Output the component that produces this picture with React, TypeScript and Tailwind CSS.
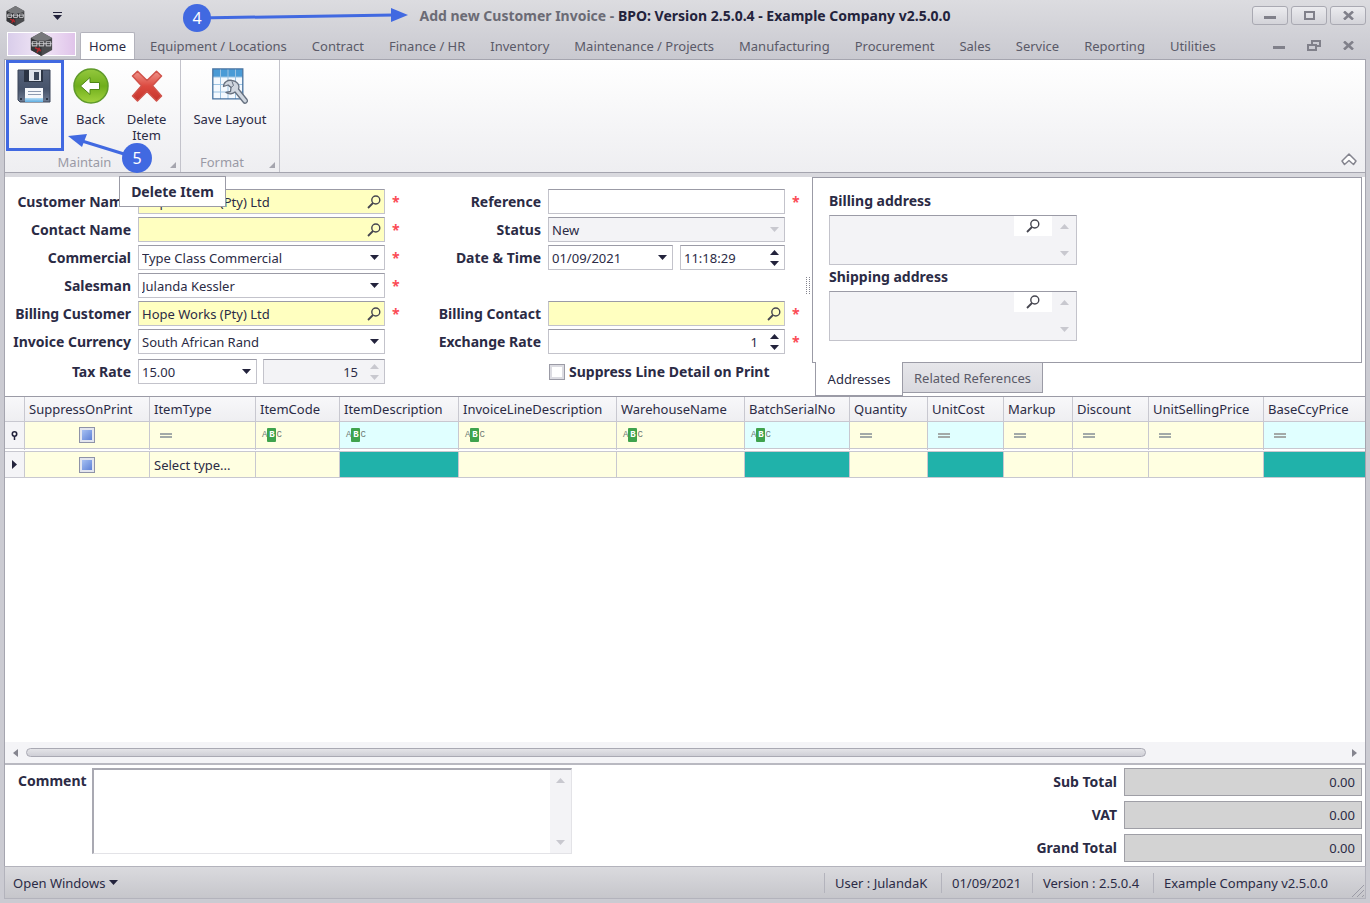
import type { ReactNode } from "react";
import clsx from "clsx";

const TABS = [
    "Equipment / Locations",
    "Contract",
    "Finance / HR",
    "Inventory",
    "Maintenance / Projects",
    "Manufacturing",
    "Procurement",
    "Sales",
    "Service",
    "Reporting",
    "Utilities",
];

interface Column {
    name: string;
    width: string;
    filter: "check" | "equals" | "text";
    locked?: boolean;
}

const COLUMNS: Column[] = [
    { name: "SuppressOnPrint", width: "w-[125px]", filter: "check" },
    { name: "ItemType", width: "w-[106px]", filter: "equals" },
    { name: "ItemCode", width: "w-[84px]", filter: "text" },
    { name: "ItemDescription", width: "w-[119px]", filter: "text", locked: true },
    { name: "InvoiceLineDescription", width: "w-[158px]", filter: "text" },
    { name: "WarehouseName", width: "w-[128px]", filter: "text" },
    { name: "BatchSerialNo", width: "w-[105px]", filter: "text", locked: true },
    { name: "Quantity", width: "w-[78px]", filter: "equals" },
    { name: "UnitCost", width: "w-[76px]", filter: "equals", locked: true },
    { name: "Markup", width: "w-[69px]", filter: "equals" },
    { name: "Discount", width: "w-[76px]", filter: "equals" },
    { name: "UnitSellingPrice", width: "w-[115px]", filter: "equals" },
    { name: "BaseCcyPrice", width: "w-auto", filter: "equals", locked: true },
];

const TOTALS = ["Sub Total", "VAT", "Grand Total"];

function Arrow({ up = false, muted = false }: { up?: boolean; muted?: boolean }) {
    return (
        <svg viewBox="0 0 9 5" className={clsx("h-[5px] w-[9px] shrink-0", muted ? "fill-[#c8c8cf]" : "fill-[#23233c]")} aria-hidden="true">
            <path d={up ? "M0 5h9L4.500 0z" : "M0 0h9L4.500 5z"} />
        </svg>
    );
}

function SearchIcon() {
    return (
        <svg viewBox="0 0 14 14" className="size-[14px] shrink-0 fill-none stroke-[#45454f]" strokeWidth="1.400" aria-hidden="true">
            <circle cx="8.800" cy="5" r="4" />
            <path d="M6 8 1 13" strokeWidth="1.800" />
        </svg>
    );
}

function HexLogo({ className }: { className: string }) {
    return (
        <svg viewBox="0 0 24 26" className={className} aria-hidden="true">
            <path d="M12 0 23.500 6.500v13L12 26 .5 19.500v-13z" fill="#4b4c4f" />
            <path d="M12 0 23.500 6.500 12 12 .5 6.500z" fill="#77787b" />
            <path d="M12 13v13L.5 19.500v-13z" fill="#333538" />
            <path d="M1 9.500h22v6.500H1z" fill="#26272a" />
            <path d="M2 10.500h5v4.500H2zM9.500 10.500h5v4.500h-5zM17 10.500h5v4.500h-5z" fill="none" stroke="#c4c4c8" strokeWidth="1.200" />
            <path d="M1 12.700h22" stroke="#d4d4d8" />
            <path d="M5 17l4 2-2 3M9 17l2 4" stroke="#b3262c" strokeWidth="1.600" fill="none" />
        </svg>
    );
}

function SaveIcon() {
    return (
        <svg viewBox="0 0 34 34" className="size-[34px]" aria-hidden="true">
            <defs>
                <linearGradient id="disk" x1="0" y1="0" x2="0" y2="1">
                    <stop offset="0" stopColor="#55627a" />
                    <stop offset="0.600" stopColor="#46536a" />
                    <stop offset="1" stopColor="#6f7c92" />
                </linearGradient>
                <linearGradient id="diskBlue" x1="0" y1="0" x2="0" y2="1">
                    <stop offset="0" stopColor="#b5dcf5" />
                    <stop offset="1" stopColor="#5faee2" />
                </linearGradient>
            </defs>
            <path d="M1 1h32v32H3l-2-2z" fill="url(#disk)" stroke="#3a4559" />
            <path d="M7 1h19v12H7z" fill="#2b3444" />
            <path d="M12 1h12v11H12z" fill="#dfe4ec" />
            <path d="M17 3h5v8h-5z" fill="#3a465a" />
            <path d="M8 19h18v14H8z" fill="#f6f8fb" />
            <path d="M8 29h18v4H8z" fill="url(#diskBlue)" />
            <path d="M11 22.500h13M11 25.500h13" stroke="#8d9ab0" />
            <path d="M3 29h2v2H3zM29 29h2v2h-2z" fill="#2b3444" />
        </svg>
    );
}

function BackIcon() {
    return (
        <svg viewBox="0 0 36 36" className="size-[36px]" aria-hidden="true">
            <defs>
                <linearGradient id="green" x1="0" y1="0" x2="0" y2="1">
                    <stop offset="0" stopColor="#94c83e" />
                    <stop offset="0.500" stopColor="#6fae1c" />
                    <stop offset="1" stopColor="#a3d33f" />
                </linearGradient>
            </defs>
            <circle cx="18" cy="18" r="17" fill="url(#green)" stroke="#5f9a2a" strokeWidth="1.500" />
            <path d="M7.500 18 17 9.500v5h9.500v7H17v5z" fill="#fff" stroke="#4f8716" />
        </svg>
    );
}

function DeleteIcon() {
    return (
        <svg viewBox="0 0 32 32" className="size-[32px]" aria-hidden="true">
            <defs>
                <linearGradient id="red" x1="0" y1="0" x2="0" y2="1">
                    <stop offset="0" stopColor="#f0948a" />
                    <stop offset="0.500" stopColor="#dc4a40" />
                    <stop offset="1" stopColor="#c4332c" />
                </linearGradient>
            </defs>
            <path
                d="M1.500 6 6.500 1.200 16 10.500 25.500 1.200 30.500 6 21.500 15.800 30.500 26 25.500 31 16 21.500 6.500 31 1.500 26 10.500 15.800z"
                fill="url(#red)"
                stroke="#d0524a"
                strokeWidth="1.500"
                strokeLinejoin="round"
            />
        </svg>
    );
}

function LayoutIcon() {
    return (
        <svg viewBox="0 0 36 37" className="h-[37px] w-[36px]" aria-hidden="true">
            <path d="M.8.8h30v30H.8z" fill="#f4f9fe" />
            <path d="M1 1h29.500v8H1z" fill="#4a9bd6" />
            <path d="M1 9h30M1 16.500h30M1 24h30M8.500 1v30M16 1v30M23.500 1v30" stroke="#9cc3e2" />
            <path d="M.8.8h30v30H.8z" fill="none" stroke="#4672a0" strokeWidth="1.300" />
            <path
                d="M20 12.500c-4-1-8.500 1.500-8.500 6l4.500-1.500 3 2.500-.5 4-4.500 1c3 2 7 1.500 9-.5l8.500 10.500c1.500 2 5-.5 3.500-3L26.500 21c1.500-4-1.500-8-6.500-8.500z"
                fill="#cfd6df"
                stroke="#66707f"
                strokeLinejoin="round"
                strokeWidth="1.300"
            />
            <path d="M20 13.500l1.500 4-2.500 2-3-2.500" fill="none" stroke="#66707f" />
        </svg>
    );
}

function RibbonButton({ icon, label, className }: { icon: ReactNode; label: string; className: string }) {
    return (
        <button type="button" className={clsx("flex flex-col items-center text-center leading-4", className)}>
            <span className="mb-1.5 flex h-[38px] items-center">{icon}</span>
            {label}
        </button>
    );
}

function RibbonGroup({ title, className, children }: { title: string; className: string; children: ReactNode }) {
    return (
        <section className={clsx("flex flex-col border-r border-[#c3c3cb]", className)}>
            <div className="flex flex-1 items-start pt-[7px]">{children}</div>
            <div className="relative flex h-5 items-center justify-center pr-4 text-[#9a9aa6]">
                {title}
                <svg viewBox="0 0 6 6" className="absolute right-1 bottom-1 size-[6px] fill-[#a5a5ae]" aria-hidden="true">
                    <path d="M6 0v6H0z" />
                </svg>
            </div>
        </section>
    );
}

interface FieldProps {
    id: string;
    label: string;
    value?: string;
    kind?: "search" | "select" | "spin" | "plain";
    disabled?: boolean;
    align?: "left" | "right";
    className?: string;
}

function Box({ id, label, value = "", kind = "plain", disabled = false, align = "left", className }: FieldProps) {
    return (
        <div
            className={clsx(
                "flex h-[25px] min-w-0 items-center border border-[#c3c3cb] border-t-[#9b9ba6]",
                kind === "search" ? "bg-[#ffffc0]" : disabled ? "bg-[#f3f3f6]" : "bg-white",
                className,
            )}
        >
            {kind === "select" ? (
                <div className="relative flex h-full min-w-0 flex-1 items-center">
                    <select
                        id={id}
                        aria-label={label}
                        disabled={disabled}
                        className="h-full w-full appearance-none bg-transparent pl-[3px] opacity-100"
                    >
                        <option>{value}</option>
                    </select>
                    <span className="pointer-events-none absolute right-[5px]">
                        <Arrow muted={disabled} />
                    </span>
                </div>
            ) : (
                <input
                    id={id}
                    aria-label={label}
                    disabled={disabled}
                    defaultValue={value}
                    className={clsx(
                        "h-full min-w-0 flex-1 bg-transparent",
                        align === "right" ? "pr-3 text-right" : "pl-[3px]",
                    )}
                />
            )}
            {kind === "search" && (
                <button type="button" aria-label={`Find ${label}`} className="pr-[3px]">
                    <SearchIcon />
                </button>
            )}
            {kind === "spin" && (
                <span className="flex flex-col gap-1.5 pr-[5px]">
                    <Arrow up muted={disabled} />
                    <Arrow muted={disabled} />
                </span>
            )}
        </div>
    );
}

function Row({ id, label, required = false, children }: { id: string; label: string; required?: boolean; children: ReactNode }) {
    return (
        <>
            <label htmlFor={id} className="text-right text-sm leading-[25px] font-bold whitespace-nowrap">
                {label}
            </label>
            <div className="flex gap-1.5">{children}</div>
            <span className="text-sm leading-[25px] font-bold text-[#fb4a55]">{required && "*"}</span>
        </>
    );
}

function Address({ id, label }: { id: string; label: string }) {
    return (
        <div className="w-[248px]">
            <label htmlFor={id} className="block pb-1 text-sm leading-5 font-bold">
                {label}
            </label>
            <div className="flex h-[50px] items-start border border-[#c3c3cb] border-t-[#9b9ba6] bg-[#f3f3f6]">
                <textarea id={id} readOnly className="h-full min-w-0 flex-1 resize-none" />
                <button type="button" aria-label={`Find ${label}`} className="flex h-5 w-[38px] items-center justify-center bg-white">
                    <SearchIcon />
                </button>
                <span className="flex h-full w-6 flex-col items-center justify-between py-2">
                    <Arrow up muted />
                    <Arrow muted />
                </span>
            </div>
        </div>
    );
}

function GridCheck({ label }: { label: string }) {
    return (
        <input
            type="checkbox"
            aria-label={label}
            className="mx-auto block size-4 appearance-none border border-[#8f93a8] bg-linear-to-br from-[#b5cdf8] to-[#5274cf] shadow-[inset_0_0_0_2px_#e3e6ef]"
        />
    );
}

function FilterMark({ column }: { column: Column }) {
    if (column.filter === "check") return <GridCheck label={`Filter ${column.name}`} />;
    if (column.filter === "equals") {
        return <span className="ml-2.5 block h-[5px] w-3 border-y-2 border-[#a3aaa8]" />;
    }
    return (
        <span className="ml-1.5 flex items-center font-['Liberation_Mono',monospace] text-[9px] leading-none text-[#6f7a76]">
            A<span className="flex h-[14px] w-[9px] items-center justify-center rounded-[1px] bg-[#3fa34d] font-bold text-white">B</span>C
        </span>
    );
}

function LineGrid() {
    return (
        <div className="flex min-h-[368px] flex-1 flex-col overflow-hidden border-t border-b-2 border-t-[#9b9ba6] border-b-[#b9b9c1] bg-white">
            <table className="w-full table-fixed border-separate border-spacing-0">
                <colgroup>
                    <col className="w-5" />
                    {COLUMNS.map((c) => (
                        <col key={c.name} className={c.width} />
                    ))}
                </colgroup>
                <thead>
                    <tr className="h-[25px] bg-linear-to-b from-[#f8f8fa] to-[#eeeef1]">
                        <th className="border-r border-b border-[#c8c8d0]" aria-label="Row marker" />
                        {COLUMNS.map((c) => (
                            <th key={c.name} className="border-r border-b border-[#c8c8d0] pl-1 text-left font-normal whitespace-nowrap last:border-r-0">
                                {c.name}
                            </th>
                        ))}
                    </tr>
                </thead>
                <tbody>
                    <tr className="h-[30px]">
                        <td className="border-r border-b-4 border-[#c8c8d0] bg-[#f4f4f7] bg-clip-padding [border-bottom-style:double]">
                            <svg viewBox="0 0 7 9" className="mx-auto h-[9px] w-[7px]" aria-hidden="true">
                                <path d="M3.500 9V5" stroke="#23233c" strokeWidth="1.500" />
                                <circle cx="3.500" cy="3" r="2.200" fill="#fff" stroke="#23233c" strokeWidth="1.600" />
                            </svg>
                        </td>
                        {COLUMNS.map((c) => (
                            <td
                                key={c.name}
                                className={clsx(
                                    "border-r border-b-4 border-[#c8c8d0] bg-clip-padding [border-bottom-style:double] last:border-r-0",
                                    c.locked ? "bg-[#e0ffff]" : "bg-[#ffffe1]",
                                )}
                            >
                                <FilterMark column={c} />
                            </td>
                        ))}
                    </tr>
                    <tr className="h-[26px]">
                        <td className="border-r border-b border-[#c8c8d0] bg-[#f4f4f7]">
                            <svg viewBox="0 0 5 9" className="mx-auto h-[9px] w-[5px] fill-[#23233c]" aria-hidden="true">
                                <path d="M0 0v9l5-4.500z" />
                            </svg>
                        </td>
                        {COLUMNS.map((c) => (
                            <td
                                key={c.name}
                                className={clsx(
                                    "border-r border-b border-[#c8c8d0] last:border-r-0",
                                    c.locked ? "bg-[#20b2aa]" : "bg-[#ffffe1]",
                                )}
                            >
                                {c.filter === "check" && <GridCheck label={c.name} />}
                                {c.name === "ItemType" && <span className="pl-1">Select type...</span>}
                            </td>
                        ))}
                    </tr>
                </tbody>
            </table>

            <div className="mt-auto flex h-[21px] items-center gap-2 bg-[#f4f4f7] px-2">
                <svg viewBox="0 0 5 8" className="h-2 w-[5px] fill-[#85858f]" aria-hidden="true">
                    <path d="M5 0v8L0 4z" />
                </svg>
                <div className="flex-1">
                    <div className="h-[9px] w-[85%] rounded-full border border-[#a9a9b3] bg-linear-to-b from-[#e4e4e8] to-[#cfcfd6]" />
                </div>
                <svg viewBox="0 0 5 8" className="h-2 w-[5px] fill-[#85858f]" aria-hidden="true">
                    <path d="M0 0v8l5-4z" />
                </svg>
            </div>
        </div>
    );
}

function WindowButtons() {
    const frame = "flex h-[19px] w-9 items-center justify-center rounded-[3px] border border-[#a9a9b2] bg-linear-to-b from-[#ececef] to-[#d3d3d9]";
    return (
        <div className="flex gap-[3px]">
            <button type="button" aria-label="Minimize" className={frame}>
                <span className="mt-1 h-[3px] w-3 bg-[#80808a]" />
            </button>
            <button type="button" aria-label="Maximize" className={frame}>
                <span className="h-[9px] w-[11px] border-2 border-[#80808a]" />
            </button>
            <button type="button" aria-label="Close" className={frame}>
                <CrossMark />
            </button>
        </div>
    );
}

function CrossMark() {
    return (
        <svg viewBox="0 0 11 9" className="h-[9px] w-[11px] stroke-[#80808a]" strokeWidth="2.600" aria-hidden="true">
            <path d="M1 .5 10 8.500M10 .5 1 8.500" />
        </svg>
    );
}

// Numbered help markers with their pointers, drawn over the window
function Callouts() {
    return (
        <div className="pointer-events-none absolute inset-0 text-white">
            <div className="absolute top-[60px] left-[6px] h-[91px] w-[58px] border-3 border-[#4169e1]" />
            <svg viewBox="0 0 420 190" className="absolute top-0 left-0 h-[190px] w-[420px] fill-[#4169e1] stroke-[#4169e1]" aria-hidden="true">
                <path d="M197 18 394 15" strokeWidth="3" />
                <path d="M391 8v14l17-7z" stroke="none" />
                <path d="M137 158 82 141" strokeWidth="3" />
                <path d="M68 136l19-2-5 13z" stroke="none" />
            </svg>
            <div className="absolute top-[4px] left-[183px] flex size-7 items-center justify-center rounded-full bg-[#4169e1] text-base">4</div>
            <div className="absolute top-[143px] left-[122px] flex size-[30px] items-center justify-center rounded-full bg-[#4169e1] text-base">5</div>
            <div className="absolute top-[176px] left-[119px] flex h-[31px] w-[107px] items-center justify-center border border-[#9b9ba6] bg-white text-sm font-bold text-[#2b2b45]">
                Delete Item
            </div>
        </div>
    );
}

export default function App() {
    return (
        <div className="relative flex min-h-screen flex-col bg-[#cbcbd2] px-1 pb-1 font-['Noto_Sans',sans-serif] text-[13px] leading-4 text-[#2b2b45]">
            <header className="-mx-1 bg-linear-to-b from-[#dcdce0] to-[#c9c9d0] px-1">
                <div className="grid h-[31px] grid-cols-[1fr_auto_1fr] items-center">
                    <div className="flex items-center gap-7 pl-0.5">
                        <HexLogo className="h-5 w-[19px]" />
                        <button type="button" aria-label="Customize toolbar" className="flex flex-col items-center gap-0.5">
                            <span className="h-px w-[9px] bg-[#23233c]" />
                            <Arrow />
                        </button>
                    </div>
                    <h1 className="text-sm font-bold text-[#6b6b75]">
                        Add new Customer Invoice - <span className="text-[#23233c]">BPO: Version 2.5.0.4 - Example Company v2.5.0.0</span>
                    </h1>
                    <div className="flex justify-end">
                        <WindowButtons />
                    </div>
                </div>
                <nav className="flex h-7 items-stretch pt-px text-[#5a5a68]">
                    <button
                        type="button"
                        aria-label="Application menu"
                        className="mr-1 ml-[3px] flex h-6 w-[69px] items-center justify-center border border-white bg-linear-to-r from-[#d9cdea] via-[#f1e6f6] to-[#e0c4ea]"
                    >
                        <HexLogo className="h-6 w-[23px]" />
                    </button>
                    <a href="#home" className="flex w-[55px] items-center justify-center rounded-t-xs border border-b-0 border-[#b3b3bc] bg-white text-[#2b2b45]">
                        Home
                    </a>
                    <div className="flex items-center gap-[25px] pl-[15px]">
                        {TABS.map((tab) => (
                            <a key={tab} href="#tab" className="whitespace-nowrap">
                                {tab}
                            </a>
                        ))}
                    </div>
                    <div className="ml-auto flex items-center gap-[22px] pr-3">
                        <button type="button" aria-label="Minimize document" className="mt-1 h-[3px] w-3 bg-[#80808a]" />
                        <button type="button" aria-label="Restore document">
                            <svg viewBox="0 0 14 11" className="h-[11px] w-[14px] fill-[#cbcbd2] stroke-[#80808a]" strokeWidth="2" aria-hidden="true">
                                <path d="M5 1h8v5H5z" />
                                <path d="M1 5h8v5H1z" />
                            </svg>
                        </button>
                        <button type="button" aria-label="Close document">
                            <CrossMark />
                        </button>
                    </div>
                </nav>
            </header>

            <div className="flex h-[114px] border border-[#a5a5af] bg-linear-to-b from-white to-[#eeeef1]">
                <RibbonGroup title="Maintain" className="w-[176px]">
                    <RibbonButton icon={<SaveIcon />} label="Save" className="w-[58px]" />
                    <RibbonButton icon={<BackIcon />} label="Back" className="w-[55px]" />
                    <RibbonButton icon={<DeleteIcon />} label="Delete Item" className="w-[57px]" />
                </RibbonGroup>
                <RibbonGroup title="Format" className="w-[99px]">
                    <RibbonButton icon={<LayoutIcon />} label="Save Layout" className="w-full" />
                </RibbonGroup>
                <button type="button" aria-label="Collapse ribbon" className="mt-auto mr-2 mb-1.5 ml-auto">
                    <svg viewBox="0 0 16 13" className="h-[13px] w-4 fill-white stroke-[#85858f]" strokeWidth="1.500" strokeLinejoin="round" aria-hidden="true">
                        <path d="M8 1 15 8l-2.500 3.500L8 7.500 3.500 11.500 1 8z" />
                    </svg>
                </button>
            </div>

            <main className="flex flex-1 flex-col border-x border-[#a5a5af] bg-white">
                <div className="flex items-start border-t-4 border-[#d9d9de]">
                    <form className="grid shrink-0 grid-cols-[126px_247px_20px_122px_237px_14px] grid-rows-[repeat(6,25px)_27px] items-end gap-x-[7px] gap-y-[3px] pt-3">
                        <Row id="customer" label="Customer Name" required>
                            <Box id="customer" label="Customer Name" kind="search" value="Hope Works (Pty) Ltd" className="flex-1" />
                        </Row>
                        <Row id="reference" label="Reference" required>
                            <Box id="reference" label="Reference" className="flex-1" />
                        </Row>

                        <Row id="contact" label="Contact Name" required>
                            <Box id="contact" label="Contact Name" kind="search" className="flex-1" />
                        </Row>
                        <Row id="status" label="Status">
                            <Box id="status" label="Status" kind="select" value="New" disabled className="flex-1" />
                        </Row>

                        <Row id="commercial" label="Commercial" required>
                            <Box id="commercial" label="Commercial" kind="select" value="Type Class Commercial" className="flex-1" />
                        </Row>
                        <Row id="date" label="Date &amp; Time">
                            <Box id="date" label="Date" kind="select" value="01/09/2021" className="w-[125px]" />
                            <Box id="time" label="Time" kind="spin" value="11:18:29" className="ml-auto w-[105px]" />
                        </Row>

                        <Row id="salesman" label="Salesman" required>
                            <Box id="salesman" label="Salesman" kind="select" value="Julanda Kessler" className="flex-1" />
                        </Row>
                        <div className="col-span-3" />

                        <Row id="billing-customer" label="Billing Customer" required>
                            <Box id="billing-customer" label="Billing Customer" kind="search" value="Hope Works (Pty) Ltd" className="flex-1" />
                        </Row>
                        <Row id="billing-contact" label="Billing Contact" required>
                            <Box id="billing-contact" label="Billing Contact" kind="search" className="flex-1" />
                        </Row>

                        <Row id="currency" label="Invoice Currency">
                            <Box id="currency" label="Invoice Currency" kind="select" value="South African Rand" className="flex-1" />
                        </Row>
                        <Row id="exchange" label="Exchange Rate" required>
                            <Box id="exchange" label="Exchange Rate" kind="spin" value="1" align="right" className="flex-1" />
                        </Row>

                        <Row id="tax" label="Tax Rate">
                            <Box id="tax" label="Tax Rate" kind="select" value="15.00" className="w-[119px]" />
                            <Box id="tax-value" label="Tax value" kind="spin" value="15" align="right" disabled className="flex-1" />
                        </Row>
                        <label className="col-span-2 col-start-5 flex h-[25px] items-center gap-1 text-sm font-bold whitespace-nowrap">
                            <input
                                type="checkbox"
                                className="ml-px size-4 appearance-none border border-[#9b9ba6] bg-white shadow-[inset_0_0_0_2px_#dcdce2]"
                            />
                            Suppress Line Detail on Print
                        </label>
                    </form>

                    <div className="mt-[100px] mr-0.5 h-[17px] w-1 shrink-0 border-x border-dotted border-[#85858f]" />

                    <section className="mr-[3px] flex min-w-[270px] flex-1 flex-col">
                        <div className="flex h-[186px] flex-col gap-0.5 border border-[#9b9ba6] pt-[13px] pl-4">
                            <Address id="billing-address" label="Billing address" />
                            <Address id="shipping-address" label="Shipping address" />
                        </div>
                        <div className="flex items-start pl-[3px]" role="tablist">
                            <button
                                type="button"
                                role="tab"
                                aria-selected="true"
                                className="-mt-px h-[34px] w-[88px] border border-t-0 border-[#9b9ba6] bg-white"
                            >
                                Addresses
                            </button>
                            <button
                                type="button"
                                role="tab"
                                aria-selected="false"
                                className="h-[30px] w-[140px] border border-t-0 border-l-0 border-[#9b9ba6] bg-linear-to-b from-[#e6e6ea] to-[#d9d9df] text-[#5a5a68]"
                            >
                                Related References
                            </button>
                        </div>
                    </section>
                </div>

                <LineGrid />

                <div className="flex items-start justify-between pt-[3px] pr-[3px] pb-1 pl-[13px]">
                    <div className="flex gap-[5px]">
                        <label htmlFor="comment" className="pt-[3px] text-sm leading-5 font-bold">
                            Comment
                        </label>
                        <div className="flex h-[86px] w-[480px] border-t-2 border-r border-b border-l-2 border-[#e3e3e7] border-t-[#a9a9b2] border-l-[#a9a9b2]">
                            <textarea id="comment" className="min-w-0 flex-1 resize-none" />
                            <span className="flex w-[21px] flex-col items-center justify-between bg-[#f3f3f6] py-2">
                                <Arrow up muted />
                                <Arrow muted />
                            </span>
                        </div>
                    </div>
                    <div className="grid grid-cols-[auto_238px] items-center gap-x-[7px] gap-y-[5px]">
                        {TOTALS.map((name) => (
                            <label key={name} className="contents">
                                <span className="text-right text-sm font-bold">{name}</span>
                                <input readOnly value="0.00" className="h-7 border border-[#9f9fa6] bg-[#d3d3d3] px-1.5 text-right" />
                            </label>
                        ))}
                    </div>
                </div>
            </main>

            <footer className="flex h-[33px] items-center border border-[#b3b3bc] bg-linear-to-b from-[#dadade] to-[#c6c6cb]">
                <button type="button" className="flex items-center gap-1 pl-2">
                    Open Windows <Arrow />
                </button>
                <div className="ml-auto flex divide-x divide-[#b3b3bc] border-l border-[#b3b3bc] leading-5">
                    <span className="min-w-[117px] px-2.5">User : JulandaK</span>
                    <span className="min-w-[91px] px-2.5">01/09/2021</span>
                    <span className="min-w-[121px] px-2.5">Version : 2.5.0.4</span>
                    <span className="min-w-[191px] px-2.5">Example Company v2.5.0.0</span>
                </div>
                <svg viewBox="0 0 14 14" className="ml-1.5 size-[14px] self-end stroke-[#9b9ba6]" aria-hidden="true">
                    <path d="M1 13 13 1M6 13l7-7M11 13l2-2" />
                </svg>
            </footer>

            <Callouts />
        </div>
    );
}
